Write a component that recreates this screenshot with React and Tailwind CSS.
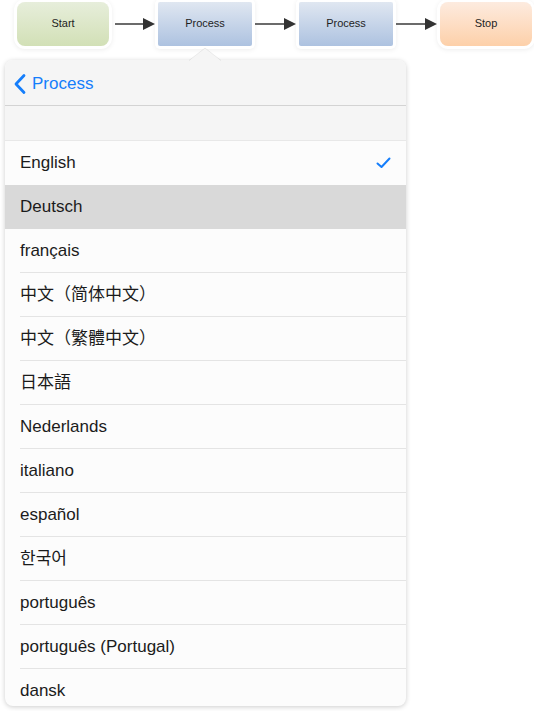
import React from "react";

const rows = [
  "English",
  "Deutsch",
  "français",
  "中文（简体中文）",
  "中文（繁體中文）",
  "日本語",
  "Nederlands",
  "italiano",
  "español",
  "한국어",
  "português",
  "português (Portugal)",
  "dansk",
];

function Box({ label, w, cls }) {
  return (
    <div
      className={`h-[44px] flex items-center justify-center pb-[1px] text-[11px] text-[#1e1e1e] shadow-[0_0_0_3px_#ffffff,0_1px_5px_3px_rgba(0,0,0,0.07)] ${cls}`}
      style={{ width: w }}
    >
      {label}
    </div>
  );
}

function Arrow({ w, start }) {
  const end = w - 3;
  return (
    <svg width={w} height="44" viewBox={`0 0 ${w} 44`} className="shrink-0">
      <line x1={start} y1="22" x2={end - 11} y2="22" stroke="#3a3a3a" strokeWidth="1.5" />
      <polygon points={`${end - 12},16 ${end},22 ${end - 12},28`} fill="#333333" />
    </svg>
  );
}

export default function App() {
  return (
    <div className="relative w-[534px] h-[711px] bg-white overflow-hidden font-['Liberation_Sans','Noto_Sans_CJK_SC','Noto_Sans_CJK_KR',sans-serif]">
      <div className="flex items-start pl-[17px] pt-[2px]">
        <Box label="Start" w={92} cls="rounded-[8px] bg-gradient-to-b from-[#e7eedb] to-[#d2e0b6]" />
        <Arrow w={49} start={6} />
        <Box label="Process" w={94} cls="rounded-[2px] bg-gradient-to-b from-[#e0e7f1] to-[#adc2e0]" />
        <Arrow w={47} start={3} />
        <Box label="Process" w={94} cls="rounded-[2px] bg-gradient-to-b from-[#e0e7f1] to-[#adc2e0]" />
        <Arrow w={47} start={3} />
        <Box label="Stop" w={92} cls="rounded-[8px] bg-gradient-to-b from-[#fdebdf] to-[#fdd0a9]" />
      </div>

      <div className="relative ml-[5px] mt-[14px] w-[401px] h-[646px]">
        <svg
          width="32"
          height="14"
          viewBox="0 0 32 14"
          className="absolute left-[184px] top-[-13px] z-10"
        >
          <polygon points="0,14 16,1 32,14" fill="#f5f5f5" />
          <polyline points="0,13.5 16,1 32,13.5" fill="none" stroke="rgba(0,0,0,0.07)" strokeWidth="1" />
        </svg>
        <div className="w-full h-full rounded-[8px] overflow-hidden bg-[#fcfcfc] shadow-[0_1px_5px_rgba(0,0,0,0.2)] flex flex-col">
          <div className="h-[46px] shrink-0 bg-[#f5f5f5] border-b border-[#d3d3d3] flex items-center pt-[2px]">
            <svg width="14" height="22" viewBox="0 0 14 22" className="ml-[8px] mt-[1px]">
              <polyline
                points="11,2.5 3,11 11,19.5"
                fill="none"
                stroke="#157efb"
                strokeWidth="2.8"
                strokeLinecap="round"
                strokeLinejoin="round"
              />
            </svg>
            <span className="ml-[5px] text-[17px] text-[#157efb]">Process</span>
          </div>
          <div className="h-[35px] shrink-0 bg-[#f5f5f5] border-b border-[#e8e8e8]" />
          {rows.map((r, i) => (
            <div
              key={i}
              className={`relative h-[44px] shrink-0 flex items-center pl-[15px] text-[17px] text-[#1b1b1b] ${
                i === 1 ? "bg-[#d9d9d9]" : ""
              }`}
            >
              <span>{r}</span>
              {i === 0 && (
                <svg width="15" height="12" viewBox="0 0 15 12" className="absolute right-[15px] top-[16px]">
                  <polyline
                    points="1.5,6.5 5.5,10 13.5,1.5"
                    fill="none"
                    stroke="#157efb"
                    strokeWidth="2"
                    strokeLinecap="round"
                    strokeLinejoin="round"
                  />
                </svg>
              )}
              {i > 1 && (
                <div className="absolute bottom-0 left-[15px] right-0 h-px bg-[#e4e4e4]" />
              )}
            </div>
          ))}
        </div>
      </div>
    </div>
  );
}
